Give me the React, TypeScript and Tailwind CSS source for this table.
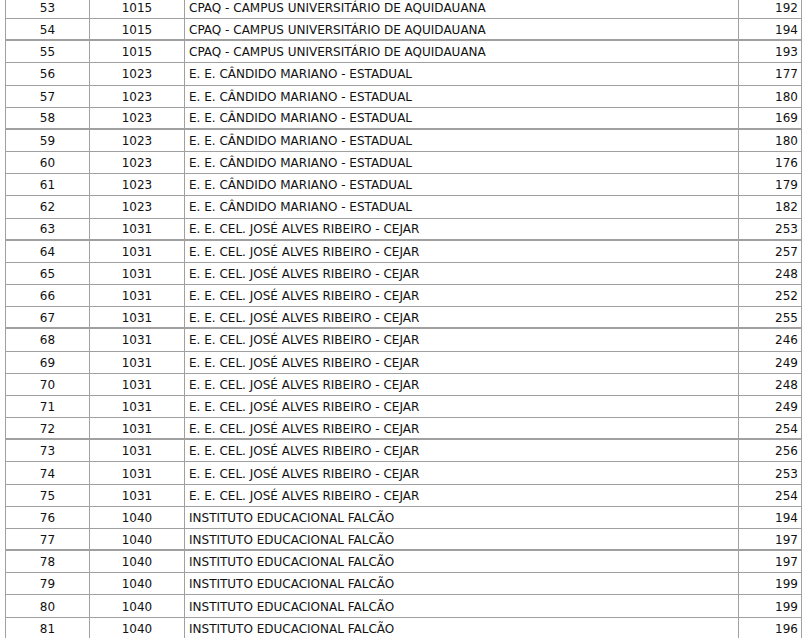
const rows: [number, string, string, number][] = [
  [53, "1015", "CPAQ - CAMPUS UNIVERSITÁRIO DE AQUIDAUANA", 192],
  [54, "1015", "CPAQ - CAMPUS UNIVERSITÁRIO DE AQUIDAUANA", 194],
  [55, "1015", "CPAQ - CAMPUS UNIVERSITÁRIO DE AQUIDAUANA", 193],
  [56, "1023", "E. E. CÂNDIDO MARIANO - ESTADUAL", 177],
  [57, "1023", "E. E. CÂNDIDO MARIANO - ESTADUAL", 180],
  [58, "1023", "E. E. CÂNDIDO MARIANO - ESTADUAL", 169],
  [59, "1023", "E. E. CÂNDIDO MARIANO - ESTADUAL", 180],
  [60, "1023", "E. E. CÂNDIDO MARIANO - ESTADUAL", 176],
  [61, "1023", "E. E. CÂNDIDO MARIANO - ESTADUAL", 179],
  [62, "1023", "E. E. CÂNDIDO MARIANO - ESTADUAL", 182],
  [63, "1031", "E. E. CEL. JOSÉ ALVES RIBEIRO - CEJAR", 253],
  [64, "1031", "E. E. CEL. JOSÉ ALVES RIBEIRO - CEJAR", 257],
  [65, "1031", "E. E. CEL. JOSÉ ALVES RIBEIRO - CEJAR", 248],
  [66, "1031", "E. E. CEL. JOSÉ ALVES RIBEIRO - CEJAR", 252],
  [67, "1031", "E. E. CEL. JOSÉ ALVES RIBEIRO - CEJAR", 255],
  [68, "1031", "E. E. CEL. JOSÉ ALVES RIBEIRO - CEJAR", 246],
  [69, "1031", "E. E. CEL. JOSÉ ALVES RIBEIRO - CEJAR", 249],
  [70, "1031", "E. E. CEL. JOSÉ ALVES RIBEIRO - CEJAR", 248],
  [71, "1031", "E. E. CEL. JOSÉ ALVES RIBEIRO - CEJAR", 249],
  [72, "1031", "E. E. CEL. JOSÉ ALVES RIBEIRO - CEJAR", 254],
  [73, "1031", "E. E. CEL. JOSÉ ALVES RIBEIRO - CEJAR", 256],
  [74, "1031", "E. E. CEL. JOSÉ ALVES RIBEIRO - CEJAR", 253],
  [75, "1031", "E. E. CEL. JOSÉ ALVES RIBEIRO - CEJAR", 254],
  [76, "1040", "INSTITUTO EDUCACIONAL FALCÃO", 194],
  [77, "1040", "INSTITUTO EDUCACIONAL FALCÃO", 197],
  [78, "1040", "INSTITUTO EDUCACIONAL FALCÃO", 197],
  [79, "1040", "INSTITUTO EDUCACIONAL FALCÃO", 199],
  [80, "1040", "INSTITUTO EDUCACIONAL FALCÃO", 199],
  [81, "1040", "INSTITUTO EDUCACIONAL FALCÃO", 196],
];

// rows whose bottom rule comes out doubled in the screenshot
const thick = new Set([54, 58, 63, 67, 72, 77]);

export default function App() {
  return (
    <div className="h-[638px] w-[805px] overflow-hidden bg-white font-['DejaVu_Sans',sans-serif] text-[12px] text-[#111]">
      <div className="-mt-[3.18px] ml-[5px] w-[797px] border-x border-[#a0a0a0]">
        {rows.map(([ord, code, name, total]) => (
          <div
            key={ord}
            className={`grid h-[22.18px] grid-cols-[84px_95px_554px_62px] border-[#a0a0a0] ${
              thick.has(ord) ? "border-b-2" : "border-b"
            }`}
          >
            <div className="flex items-center justify-center border-r border-[#a0a0a0] pt-px">{ord}</div>
            <div className="flex items-center justify-center border-r border-[#a0a0a0] pt-px">{code}</div>
            <div className="flex items-center border-r border-[#a0a0a0] pl-[4px] pt-px">{name}</div>
            <div className="flex items-center justify-end pr-[3px] pt-px">{total}</div>
          </div>
        ))}
      </div>
    </div>
  );
}
